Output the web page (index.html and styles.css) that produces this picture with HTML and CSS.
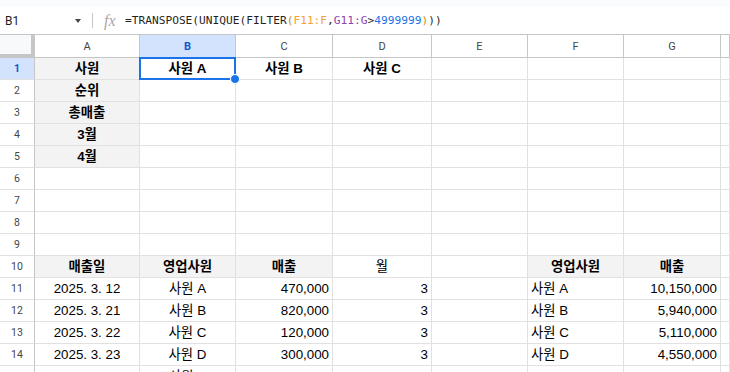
FILE: index.html
```html
<!DOCTYPE html>
<html lang="ko">

<head>
    <meta charset="UTF-8">
    <meta name="viewport" content="width=device-width, initial-scale=1.0">
    <title>Sheet</title>
    <link rel="stylesheet" href="styles.css">
</head>

<body>
    <div class="top-strip"></div>
    <div class="formula-bar">
        <div class="name-box">
            <span class="ref">B1</span>
            <span class="caret"></span>
        </div>
        <div class="divider"></div>
        <div class="fx">fx</div>
        <div class="formula">=TRANSPOSE(UNIQUE(FILTER<span class="f-par">(</span><span class="f-range1">F11:F</span>,<span class="f-range2">G11:G</span>&gt;<span class="f-num">4999999</span><span class="f-par">)</span>))</div>
    </div>

    <div class="sheet">
        <!-- column headers -->
        <div class="corner"></div>
        <div class="col-head">A</div>
        <div class="col-head selected">B</div>
        <div class="col-head">C</div>
        <div class="col-head">D</div>
        <div class="col-head">E</div>
        <div class="col-head">F</div>
        <div class="col-head">G</div>
        <div class="col-head"></div>

        <!-- row 1 -->
        <div class="row-head selected">1</div>
        <div class="cell label">사원</div>
        <div class="cell bold center active">사원 A<span class="handle"></span></div>
        <div class="cell bold center">사원 B</div>
        <div class="cell bold center">사원 C</div>
        <div class="cell"></div>
        <div class="cell"></div>
        <div class="cell"></div>
        <div class="cell"></div>

        <!-- row 2 -->
        <div class="row-head">2</div>
        <div class="cell label">순위</div>
        <div class="cell"></div><div class="cell"></div><div class="cell"></div>
        <div class="cell"></div><div class="cell"></div><div class="cell"></div><div class="cell"></div>

        <!-- row 3 -->
        <div class="row-head">3</div>
        <div class="cell label">총매출</div>
        <div class="cell"></div><div class="cell"></div><div class="cell"></div>
        <div class="cell"></div><div class="cell"></div><div class="cell"></div><div class="cell"></div>

        <!-- row 4 -->
        <div class="row-head">4</div>
        <div class="cell label">3월</div>
        <div class="cell"></div><div class="cell"></div><div class="cell"></div>
        <div class="cell"></div><div class="cell"></div><div class="cell"></div><div class="cell"></div>

        <!-- row 5 -->
        <div class="row-head">5</div>
        <div class="cell label">4월</div>
        <div class="cell"></div><div class="cell"></div><div class="cell"></div>
        <div class="cell"></div><div class="cell"></div><div class="cell"></div><div class="cell"></div>

        <!-- rows 6-9 -->
        <div class="row-head">6</div>
        <div class="cell"></div><div class="cell"></div><div class="cell"></div><div class="cell"></div>
        <div class="cell"></div><div class="cell"></div><div class="cell"></div><div class="cell"></div>

        <div class="row-head">7</div>
        <div class="cell"></div><div class="cell"></div><div class="cell"></div><div class="cell"></div>
        <div class="cell"></div><div class="cell"></div><div class="cell"></div><div class="cell"></div>

        <div class="row-head">8</div>
        <div class="cell"></div><div class="cell"></div><div class="cell"></div><div class="cell"></div>
        <div class="cell"></div><div class="cell"></div><div class="cell"></div><div class="cell"></div>

        <div class="row-head">9</div>
        <div class="cell"></div><div class="cell"></div><div class="cell"></div><div class="cell"></div>
        <div class="cell"></div><div class="cell"></div><div class="cell"></div><div class="cell"></div>

        <!-- row 10 -->
        <div class="row-head">10</div>
        <div class="cell label">매출일</div>
        <div class="cell label">영업사원</div>
        <div class="cell label">매출</div>
        <div class="cell center">월</div>
        <div class="cell"></div>
        <div class="cell label">영업사원</div>
        <div class="cell label">매출</div>
        <div class="cell"></div>

        <!-- row 11 -->
        <div class="row-head">11</div>
        <div class="cell center">2025. 3. 12</div>
        <div class="cell center">사원 A</div>
        <div class="cell right">470,000</div>
        <div class="cell right">3</div>
        <div class="cell"></div>
        <div class="cell">사원 A</div>
        <div class="cell right">10,150,000</div>
        <div class="cell"></div>

        <!-- row 12 -->
        <div class="row-head">12</div>
        <div class="cell center">2025. 3. 21</div>
        <div class="cell center">사원 B</div>
        <div class="cell right">820,000</div>
        <div class="cell right">3</div>
        <div class="cell"></div>
        <div class="cell">사원 B</div>
        <div class="cell right">5,940,000</div>
        <div class="cell"></div>

        <!-- row 13 -->
        <div class="row-head">13</div>
        <div class="cell center">2025. 3. 22</div>
        <div class="cell center">사원 C</div>
        <div class="cell right">120,000</div>
        <div class="cell right">3</div>
        <div class="cell"></div>
        <div class="cell">사원 C</div>
        <div class="cell right">5,110,000</div>
        <div class="cell"></div>

        <!-- row 14 -->
        <div class="row-head">14</div>
        <div class="cell center">2025. 3. 23</div>
        <div class="cell center">사원 D</div>
        <div class="cell right">300,000</div>
        <div class="cell right">3</div>
        <div class="cell"></div>
        <div class="cell">사원 D</div>
        <div class="cell right">4,550,000</div>
        <div class="cell"></div>

        <!-- row 15 -->
        <div class="row-head">15</div>
        <div class="cell center">2025. 3. 24</div>
        <div class="cell center">사원 A</div>
        <div class="cell right">1,480,000</div>
        <div class="cell right">3</div>
        <div class="cell"></div>
        <div class="cell"></div>
        <div class="cell"></div>
        <div class="cell"></div>
    </div>
</body>

</html>
```

FILE: styles.css
```css
body {
    margin: 0;
    width: 730px;
    height: 372px;
    overflow: hidden;
    background: #ffffff;
    font-family: "Liberation Sans", Arial, "Noto Sans CJK KR", sans-serif;
}

.top-strip {
    height: 7px;
    background: #f9fbfd;
}

.formula-bar {
    display: flex;
    align-items: center;
    height: 27px;
    border-bottom: 1px solid #c4c7c5;
    background: #ffffff;
}

.formula-bar .name-box {
    display: flex;
    align-items: center;
    justify-content: space-between;
    width: 76px;
    padding-left: 5px;
    font-family: Roboto, "Liberation Sans", sans-serif;
    font-size: 12px;
    color: #1f1f1f;
}

.formula-bar .name-box .caret {
    width: 0;
    height: 0;
    border-left: 3.5px solid transparent;
    border-right: 3.5px solid transparent;
    border-top: 4px solid #444746;
}

.formula-bar .divider {
    width: 1px;
    height: 15px;
    margin-left: 11px;
    background: #c4c7c5;
}

.formula-bar .fx {
    margin-left: 11px;
    width: 21px;
    font-family: "Liberation Serif", serif;
    font-style: italic;
    font-size: 16px;
    color: #a8a8a8;
}

.formula-bar .formula {
    font-family: "DejaVu Sans Mono", monospace;
    font-size: 11.2px;
    color: #1f1f1f;
    white-space: nowrap;
}

.formula .f-range1 { color: #f4a03a; }
.formula .f-range2 { color: #8e44ad; }
.formula .f-num { color: #1a73e8; }
.formula .f-par { color: #c58a1d; }

.sheet {
    display: grid;
    grid-template-columns: 35px 105px 96px 97px 99px 96px 96px 97px 1fr;
    grid-template-rows: 23px;
    grid-auto-rows: 22px;
}

.corner {
    background: #f8f9fa;
    border-right: 4px solid #c4c7c5;
    border-bottom: 4px solid #c4c7c5;
}

.col-head {
    display: flex;
    align-items: center;
    justify-content: center;
    background: #ffffff;
    border-right: 1px solid #c4c7c5;
    border-bottom: 1px solid #c4c7c5;
    font-family: Roboto, "Liberation Sans", sans-serif;
    font-size: 11px;
    color: #444746;
}

.col-head.selected {
    background: #d3e3fd;
    color: #0b57d0;
    font-weight: 700;
    border-bottom-color: #0b57d0;
}

.row-head {
    display: flex;
    align-items: center;
    justify-content: center;
    background: #ffffff;
    border-right: 1px solid #c4c7c5;
    border-bottom: 1px solid #e1e1e1;
    font-family: Roboto, "Liberation Sans", sans-serif;
    font-size: 10.5px;
    color: #444746;
}

.row-head.selected {
    background: #d3e3fd;
    color: #0b57d0;
    font-weight: 700;
}

.cell {
    border-right: 1px solid #e1e1e1;
    border-bottom: 1px solid #e1e1e1;
    padding: 0 3px;
    font-size: 13.33px;
    line-height: 21px;
    color: #000000;
    white-space: nowrap;
    overflow: hidden;
}

.cell.label {
    background: #f3f3f3;
    font-weight: 700;
    text-align: center;
}

.cell.bold {
    font-weight: 700;
}

.cell.center {
    text-align: center;
}

.cell.right {
    text-align: right;
}

.cell.active {
    position: relative;
    overflow: visible;
}

.cell.active::after {
    content: "";
    position: absolute;
    left: -1px;
    top: -1px;
    right: -1px;
    bottom: -1px;
    border: 2px solid #1a73e8;
    pointer-events: none;
}

.cell.active .handle {
    position: absolute;
    right: -5px;
    bottom: -5px;
    width: 8px;
    height: 8px;
    border-radius: 50%;
    background: #1a73e8;
    border: 1px solid #ffffff;
    z-index: 2;
}
```
